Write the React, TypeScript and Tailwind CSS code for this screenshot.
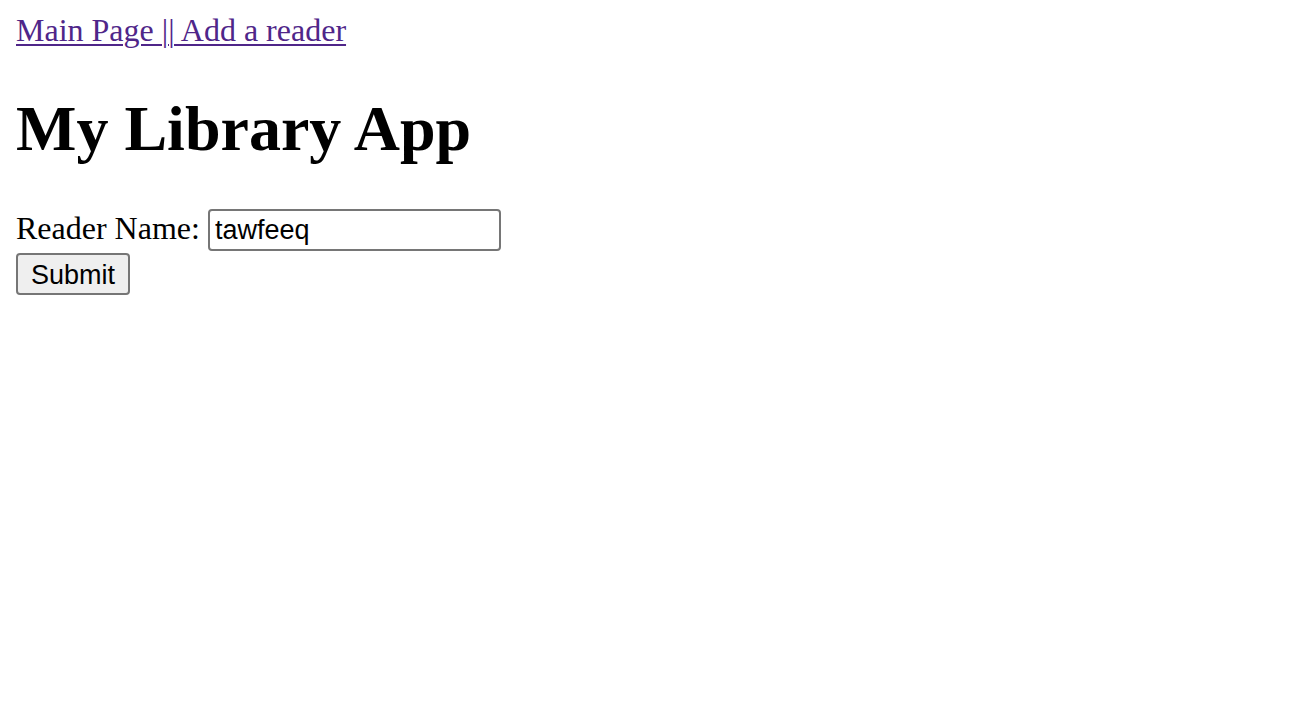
import { useState } from "react";

export default function App() {
  const [name, setName] = useState("tawfeeq");

  return (
    <div className="min-h-screen bg-white px-4 pt-3 pb-4 font-['Liberation_Serif',serif] text-[32px] leading-[37px] text-black">
      <nav>
        <a href="#" className="text-[#4f2689] underline decoration-2 underline-offset-[3px]">
          Main Page || Add a reader
        </a>
      </nav>
      <h1 className="my-[43px] text-[64px] leading-[74px] font-bold">My Library App</h1>
      <form onSubmit={(e) => e.preventDefault()}>
        <label className="block">
          Reader Name:{" "}
          <input
            value={name}
            onChange={(e) => setName(e.target.value)}
            className="h-[42px] w-[293px] rounded-[4px] border-2 border-[#767676] bg-white px-[5px] align-baseline font-['Liberation_Sans',sans-serif] text-[27px] leading-normal text-black outline-none"
          />
        </label>
        <button
          type="submit"
          className="mt-[2px] block h-[42px] w-[114px] rounded-[4px] border-2 border-[#767676] bg-[#efefef] font-['Liberation_Sans',sans-serif] text-[27px] leading-normal text-black"
        >
          Submit
        </button>
      </form>
    </div>
  );
}
